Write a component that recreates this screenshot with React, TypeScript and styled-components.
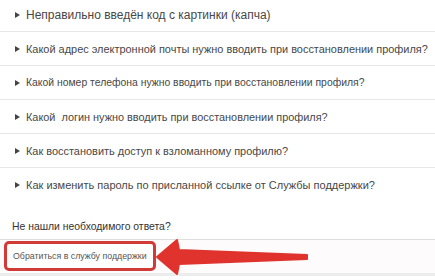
import React from "react";
import styled, { createGlobalStyle } from "styled-components";

const Global = createGlobalStyle`
  html, body { margin: 0; padding: 0; background: #ffffff; }
  body { font-family: Arial, "Liberation Sans", sans-serif; overflow: hidden; }
`;

const Page = styled.div`
  position: relative;
  width: 435px;
  height: 280px;
  overflow: hidden;
  display: flex;
  flex-direction: column;
`;

const List = styled.ul`
  list-style: none;
  margin: -2px 0 0 0;
  padding: 0;
`;

const Item = styled.li<{ $last?: boolean; $size: number }>`
  height: 34px;
  box-sizing: border-box;
  display: flex;
  align-items: center;
  padding-left: 15px;
  gap: 6px;
  border-bottom: ${(p) => (p.$last ? "none" : "1px solid #e6e6e6")};
  font-size: ${(p) => p.$size}px;
  color: #474747;
  white-space: pre;
`;

const Bullet = styled.span`
  width: 0;
  height: 0;
  border-top: 3.5px solid transparent;
  border-bottom: 3.5px solid transparent;
  border-left: 5px solid #444;
  flex: none;
`;

const Question = styled.div`
  height: 38px;
  box-sizing: border-box;
  padding: 17px 0 0 12px;
  font-size: 10.4px;
  line-height: 16px;
  color: #333;
  border-bottom: 1px solid #dedede;
`;

const SupportBar = styled.div`
  height: 36px;
  box-sizing: border-box;
  padding: 1px 0 0 4px;
  background: #fdfbfb;
  border-bottom: 3px solid #ececec;
`;

const SupportButton = styled.div`
  width: 152px;
  height: 30px;
  box-sizing: border-box;
  border: 3px solid #d23a36;
  border-radius: 5px;
  display: flex;
  align-items: center;
  padding-left: 6px;
  font-size: 8.8px;
  color: #555;
  white-space: nowrap;
  background: #fff;
`;

const Arrow = styled.svg`
  position: absolute;
  left: 150px;
  top: 236px;
  width: 165px;
  height: 42px;
`;

const items: { text: string; size: number }[] = [
  { text: "Неправильно введён код с картинки (капча)", size: 12 },
  { text: "Какой адрес электронной почты нужно вводить при восстановлении профиля?", size: 10.95 },
  { text: "Какой номер телефона нужно вводить при восстановлении профиля?", size: 10.4 },
  { text: "Какой  логин нужно вводить при восстановлении профиля?", size: 10.9 },
  { text: "Как восстановить доступ к взломанному профилю?", size: 10.95 },
  { text: "Как изменить пароль по присланной ссылке от Службы поддержки?", size: 11 },
];

export default function App() {
  return (
    <>
      <Global />
      <Page>
        <List>
          {items.map((t, i) => (
            <Item key={i} $last={i === items.length - 1} $size={t.size}>
              <Bullet />
              <span>{t.text}</span>
            </Item>
          ))}
        </List>
        <Question>Не нашли необходимого ответа?</Question>
        <SupportBar>
          <SupportButton>Обратиться в службу поддержки</SupportButton>
        </SupportBar>
        <Arrow viewBox="150 236 165 42">
          <path
            d="M157 257 L177 240 L179 250 L307 255 L307 259 L179 264 L177 274 Z"
            fill="#e0332d"
            stroke="#e0332d"
            strokeWidth="2"
            strokeLinejoin="round"
          />
        </Arrow>
      </Page>
    </>
  );
}
